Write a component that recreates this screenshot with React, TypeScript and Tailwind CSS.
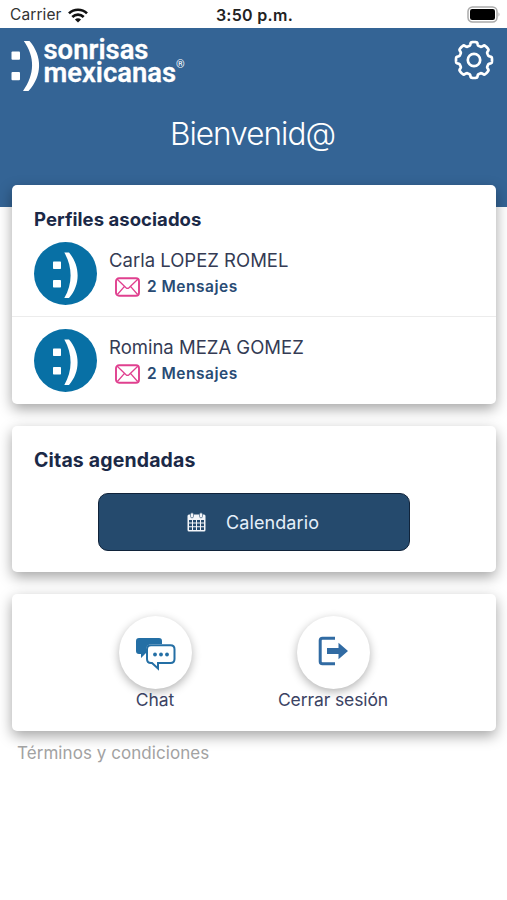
import React from "react";

const gearPath = (() => {
  const points: string[] = [];
  for (let i = 0; i < 192; i++) {
    const a = (i / 192) * Math.PI * 2;
    const r = 16.4 + 1.6 * Math.tanh(3 * Math.cos(8 * a) + 0.6);
    points.push(`${(20 + r * Math.sin(a)).toFixed(2)} ${(20 - r * Math.cos(a)).toFixed(2)}`);
  }
  return `M${points.join("L")}Z`;
})();

function StatusBar() {
  return (
    <div className="grid h-7 grid-cols-3 items-center bg-white pr-[6px] pl-[10px] text-[#222]">
      <div className="flex items-center gap-[6px] pt-[2px] text-[15.5px] tracking-[0.1px] text-[#333]">
        <span>Carrier</span>
        <svg width="20" height="15" viewBox="0 0 20 15" fill="none" stroke="#111" strokeWidth="2.7">
          <path d="M1 5.4C6 .5 14 .5 19 5.4" />
          <path d="M4.3 8.9C7.6 5.8 12.4 5.8 15.7 8.9" />
          <path d="M10 14.6L6.9 11.4Q10 9 13.1 11.4Z" fill="#111" stroke="none" />
        </svg>
      </div>
      <div className="pt-[1px] pr-[2px] text-center text-[16px] font-semibold tracking-[0.3px] whitespace-nowrap">3:50 p.m.</div>
      <div className="flex justify-end">
        <svg width="34" height="17" viewBox="0 0 34 17">
          <rect x="1" y="1" width="29" height="15" rx="4.5" fill="#fff" stroke="#aaa" strokeWidth="1.5" />
          <rect x="3" y="3" width="25" height="11" rx="2.2" fill="#000" />
          <path d="M31.5 6.3Q33.5 8.5 31.5 10.7Z" fill="#aaa" />
        </svg>
      </div>
    </div>
  );
}

function Logo() {
  return (
    <svg width="178" height="56" viewBox="0 0 178 56" fill="#fff" fontFamily="Roboto, sans-serif" fontWeight="700" strokeLinejoin="round" className="overflow-visible">
      <rect x="1.5" y="15.5" width="8.5" height="8.3" rx="1" />
      <rect x="1.5" y="36" width="8.5" height="8.3" rx="1" />
      <path d="M13.8 5H19.5C32.5 20 32.5 40 18.5 55H13C25 38 25 21 13.8 5Z" />
      <text x="33.5" y="23" fontSize="27" fontWeight="600" stroke="#fff" strokeWidth=".3" textLength="105" lengthAdjust="spacingAndGlyphs">sonrisas</text>
      <text x="33.5" y="45.5" fontSize="27" fontWeight="600" stroke="#fff" strokeWidth=".3" textLength="132.5" lengthAdjust="spacingAndGlyphs">mexicanas</text>
      <text x="166" y="32" fontSize="11" fontWeight="400">®</text>
    </svg>
  );
}

function Avatar() {
  return (
    <svg width="63" height="63" viewBox="0 0 63 63" className="shrink-0">
      <circle cx="31.5" cy="31.5" r="31.5" fill="#0870a5" />
      <g fill="#fff">
        <rect x="19" y="19.5" width="8" height="7.4" rx=".7" />
        <rect x="19" y="38" width="8" height="7.4" rx=".7" />
        <path d="M30.3 10.5H35C46.5 24 46.5 43 35 56H30.3C38.7 42 38.7 25 30.3 10.5Z" />
      </g>
    </svg>
  );
}

function Profile({ name }: { name: string }) {
  return (
    <div className="flex gap-[12px] pl-[22px]">
      <Avatar />
      <div className="pt-[6px]">
        <div className="text-[18.5px] leading-6 text-[#343b54]">{name}</div>
        <div className="mt-[5px] flex items-center gap-[7px] pl-[6px]">
          <svg width="25" height="20" viewBox="0 0 25 20" fill="none" stroke="#e0408f" strokeWidth="1.3">
            <rect x="1" y="1.2" width="23" height="17.6" rx="3" strokeWidth="1.9" />
            <path d="M2.2 2.2L11 10.7Q12.5 12 14 10.7L22.8 2.2M2.4 17.5L9.5 9.4M22.6 17.5L15.5 9.4" />
          </svg>
          <span className="text-[15.5px] leading-5 font-semibold tracking-[0.5px] text-[#284b74]">2 Mensajes</span>
        </div>
      </div>
    </div>
  );
}

const cardClass = "rounded-[5px] bg-white shadow-[0_5px_14px_rgba(0,0,0,0.36)]";

function Action({ label, children }: { label: string; children: React.ReactNode }) {
  return (
    <div className="flex w-[178px] flex-col items-center">
      <div className="flex size-[73px] items-center justify-center rounded-full bg-white shadow-[0_3px_10px_rgba(0,0,0,0.3)]">{children}</div>
      <span className="text-[17.5px] leading-[21px] tracking-[-0.1px] text-[#3b4363]">{label}</span>
    </div>
  );
}

export default function App() {
  return (
    <div className="h-[900px] w-full overflow-hidden bg-white font-['Inter','Liberation_Sans',sans-serif]">
      <StatusBar />
      <header className="h-[179px] bg-[#346495] pt-[8px]">
        <div className="flex justify-between pr-[13px] pl-[10px]">
          <Logo />
          <svg className="mt-[4px]" width="40" height="40" viewBox="0 0 40 40" fill="none" stroke="#fff" strokeWidth="2.7">
            <path d={gearPath} />
            <circle cx="20" cy="20" r="6.2" />
          </svg>
        </div>
        <h1 className="mt-[22px] pr-[2px] text-center text-[31.5px] leading-10 font-light tracking-[-0.95px] text-white">Bienvenid@</h1>
      </header>
      <main className="-mt-[22px] flex flex-col gap-[22px] pr-[11px] pl-[12px]">
        <section className={`${cardClass} h-[219px]`}>
          <h2 className="h-[57px] pt-[22px] pl-[22px] text-[18.5px] leading-6 font-bold tracking-[0.05px] text-[#1b2947]">Perfiles asociados</h2>
          <Profile name="Carla LOPEZ ROMEL" />
          <div className="mt-[11px] mb-[12px] h-px bg-[#ececec]" />
          <Profile name="Romina MEZA GOMEZ" />
        </section>
        <section className={`${cardClass} h-[146px]`}>
          <h2 className="h-[67px] pt-[22px] pl-[22px] text-[19.5px] leading-6 font-bold tracking-[0.15px] text-[#1b2947]">Citas agendadas</h2>
          <button className="ml-[86px] flex h-[58px] w-[312px] items-center rounded-[10px] border-[1.5px] border-[#10233a] bg-[#254a6d] pl-[88px] text-[18px] text-[#e5f0fa]">
            <svg width="19" height="20" viewBox="0 0 19 20" fill="#f4f6fa">
              <path fillRule="evenodd" d="M2 2.5H17Q18.5 2.5 18.5 4V18Q18.5 19.5 17 19.5H2Q.5 19.5 .5 18V4Q.5 2.5 2 2.5ZM2 8V10.5H5V8ZM6 8V10.5H9V8ZM10 8V10.5H13V8ZM14 8V10.5H17V8ZM2 11.5V14.2H5V11.5ZM6 11.5V14.2H9V11.5ZM10 11.5V14.2H13V11.5ZM14 11.5V14.2H17V11.5ZM2 15.2V18H5V15.2ZM6 15.2V18H9V15.2ZM10 15.2V18H13V15.2ZM14 15.2V18H17V15.2Z" />
              <rect x="3.5" y=".8" width="3" height="5" rx="1.4" stroke="#254a6d" strokeWidth=".6" />
              <rect x="12.5" y=".8" width="3" height="5" rx="1.4" stroke="#254a6d" strokeWidth=".6" />
            </svg>
            <span className="ml-[20px] tracking-[0.1px]">Calendario</span>
          </button>
        </section>
        <section className={`${cardClass} flex h-[137px] pt-[22px] pl-[54px]`}>
          <Action label="Chat">
            <svg className="mt-[3px] ml-[1px]" width="40" height="33" viewBox="0 0 40 33">
              <path d="M3 0H23Q26 0 26 3V6H16Q10 6 10 12V15L5 20V16H3Q0 16 0 13V3Q0 0 3 0Z" fill="#246fa5" />
              <path d="M15 7.2H34.5Q38.5 7.2 38.5 11.2V21Q38.5 25 34.5 25H22V30.5L16 25H15Q11 25 11 21V11.2Q11 7.2 15 7.2Z" fill="#fff" stroke="#246fa5" strokeWidth="2" />
              <g fill="#246fa5"><circle cx="19" cy="16.5" r="1.9" /><circle cx="25" cy="16.5" r="1.9" /><circle cx="31" cy="16.5" r="1.9" /></g>
            </svg>
          </Action>
          <Action label="Cerrar sesión">
            <svg className="-mt-[4px]" width="30" height="30" viewBox="0 0 30 30" fill="none">
              <path d="M17 2.2H4.5Q2.2 2.2 2.2 4.5V25.5Q2.2 27.8 4.5 27.8H17" stroke="#316ba3" strokeWidth="3" />
              <path d="M9 12H20.5V6.8L30 15L20.5 23.2V18H9Z" fill="#316ba3" />
            </svg>
          </Action>
        </section>
      </main>
      <p className="mt-[11px] pl-[17px] text-[17px] leading-[22px] tracking-[0.06px] text-[#a2a2a2]">Términos y condiciones</p>
    </div>
  );
}
